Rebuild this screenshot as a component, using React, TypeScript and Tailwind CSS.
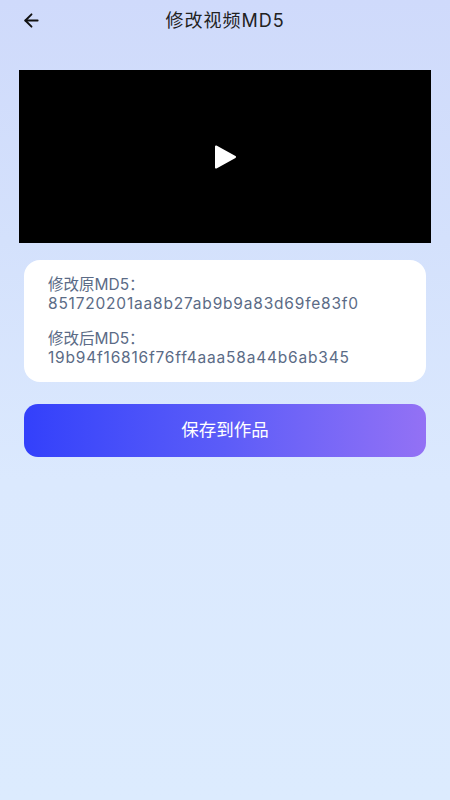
import { ArrowLeft } from 'lucide-react';

export default function App() {
  return (
    <div
      className="w-[450px] h-[800px] flex flex-col bg-[linear-gradient(180deg,#cfdafb_0%,#d4e1fc_30%,#dbe9fe_60%,#dcebfe_100%)] text-[#1a1a1a]"
      style={{ fontFamily: 'Inter, "Noto Sans CJK SC", sans-serif' }}
    >
      <div className="relative h-[42px] flex items-center justify-center shrink-0">
        <button className="absolute left-[21px] top-[10px] text-[#111]">
          <ArrowLeft className="w-[21px] h-[21px]" strokeWidth={2.2} />
        </button>
        <h1 className="text-[18px] tracking-[1px] text-[#222] leading-none">修改视频MD5</h1>
      </div>

      <div className="mt-[28px] mx-[19px] h-[173px] bg-black flex items-center justify-center">
        <svg width="26" height="26" viewBox="0 0 26 26">
          <path d="M4 2.5 L23 13 L4 23.5 Z" fill="#fff" stroke="#fff" strokeWidth="2" strokeLinejoin="round" />
        </svg>
      </div>

      <div className="mt-[17px] mx-[24px] bg-white rounded-[16px] pl-[24px] pr-2 pt-[15px] pb-[15px] text-[15.5px] leading-[19px] text-[#5b6b86]">
        <div>修改原MD5：</div>
        <div className="tracking-[0.8px]">851720201aa8b27ab9b9a83d69fe83f0</div>
        <div className="mt-[16px]">修改后MD5：</div>
        <div className="tracking-[0.8px]">19b94f16816f76ff4aaa58a44b6ab345</div>
      </div>

      <button className="mt-[22px] mx-[24px] h-[53px] rounded-[14px] bg-gradient-to-r from-[#3340fb] via-[#5c5cf8] to-[#9371f5] text-white text-[17.5px] flex items-center justify-center">
        保存到作品
      </button>
    </div>
  );
}
